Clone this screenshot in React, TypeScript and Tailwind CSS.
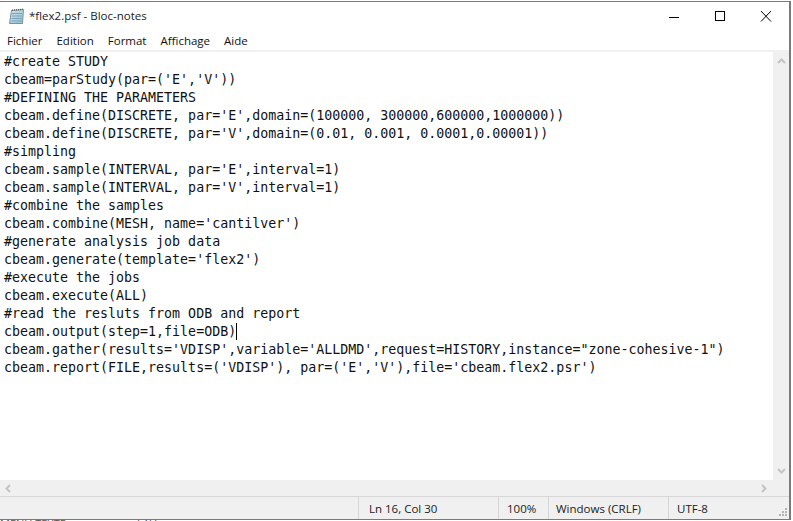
const menuItems = ['Fichier', 'Edition', 'Format', 'Affichage', 'Aide'];

const lines = [
  '#create STUDY',
  "cbeam=parStudy(par=('E','V'))",
  '#DEFINING THE PARAMETERS',
  "cbeam.define(DISCRETE, par='E',domain=(100000, 300000,600000,1000000))",
  "cbeam.define(DISCRETE, par='V',domain=(0.01, 0.001, 0.0001,0.00001))",
  '#simpling',
  "cbeam.sample(INTERVAL, par='E',interval=1)",
  "cbeam.sample(INTERVAL, par='V',interval=1)",
  '#combine the samples',
  "cbeam.combine(MESH, name='cantilver')",
  '#generate analysis job data',
  "cbeam.generate(template='flex2')",
  '#execute the jobs',
  'cbeam.execute(ALL)',
  '#read the resluts from ODB and report',
  'cbeam.output(step=1,file=ODB)',
  'cbeam.gather(results=\'VDISP\',variable=\'ALLDMD\',request=HISTORY,instance="zone-cohesive-1")',
  "cbeam.report(FILE,results=('VDISP'), par=('E','V'),file='cbeam.flex2.psr')",
];

const NotepadIcon = () => (
  <svg width="16" height="17" viewBox="0 0 16 17" className="shrink-0">
    <defs>
      <linearGradient id="pad" x1="0" y1="0" x2="1" y2="1">
        <stop offset="0" stopColor="#cfe6f0" />
        <stop offset="1" stopColor="#8fc0d6" />
      </linearGradient>
    </defs>
    <path d="M2.5 2.5 L14.5 1.5 L13.5 15.5 L.5 15.5 Z" fill="url(#pad)" stroke="#7f919b" />
    <path d="M3 5.5 H13 M3 8 H13 M2.5 10.5 H13 M2.5 13 H13" stroke="#7ea3b6" />
    <path d="M3.5 1.5 V3 M5.5 1.3 V2.8 M7.5 1.1 V2.6 M9.5 1 V2.5 M11.5 .8 V2.3 M13.5 .6 V2.1" stroke="#666" />
  </svg>
);

const App = () => {
  return (
    <div className="w-[793px] h-[521px] bg-white overflow-hidden font-['Open_Sans',sans-serif]">
      <div className="w-[791px] h-[519px] border-t border-r-2 border-b border-[#7a7a7a] mt-px flex flex-col">
        <div className="h-[29px] flex items-center gap-[4px] pl-[9px] text-[11.5px] text-[#222]">
          <NotepadIcon />
          <span className="mb-[2px]">*flex2.psf - Bloc-notes</span>
          <div className="ml-auto flex items-center">
            <svg width="46" height="29" viewBox="0 0 46 29"><path d="M18 15.5 H28" stroke="#000" /></svg>
            <svg width="46" height="29" viewBox="0 0 46 29"><rect x="18.5" y="9.5" width="9" height="9" fill="none" stroke="#000" /></svg>
            <svg width="46" height="29" viewBox="0 0 46 29"><path d="M18 9 L28 19.5 M28 9 L18 19.5" stroke="#000" /></svg>
          </div>
        </div>
        <div className="h-[19px] flex items-center gap-[14px] pl-[7px] text-[11.5px] text-[#111]">
          {menuItems.map(item => (
            <span key={item}>{item}</span>
          ))}
        </div>
        <div className="flex-1 flex flex-col border-t-2 border-[#f0f0f0] min-h-0">
          <div className="flex-1 flex min-h-0">
            <div className="flex-1 pl-1 pt-[1px] overflow-hidden font-['DejaVu_Sans_Mono',monospace] text-[13.3px] leading-[18px] text-[#111] whitespace-pre">
              {lines.map((line, index) => (
                <div key={index} className="h-[18px] flex">
                  {line}
                  {index === 15 && <span className="w-px h-[17px] bg-black" />}
                </div>
              ))}
            </div>
            <div className="w-[16px] bg-[#f0f0f0] flex flex-col justify-between items-center py-[6px] text-[#c4c4c4]">
              <svg width="9" height="6" viewBox="0 0 9 6"><path d="M1 5 L4.5 1.5 L8 5" fill="none" stroke="currentColor" strokeWidth="2" /></svg>
              <svg width="9" height="6" viewBox="0 0 9 6"><path d="M1 1 L4.5 4.5 L8 1" fill="none" stroke="currentColor" strokeWidth="2" /></svg>
            </div>
          </div>
          <div className="h-[16px] bg-[#f0f0f0] flex justify-between items-center pl-[5px] pr-[22px] text-[#c4c4c4]">
            <svg width="6" height="9" viewBox="0 0 6 9"><path d="M5 1 L1.5 4.5 L5 8" fill="none" stroke="currentColor" strokeWidth="2" /></svg>
            <svg width="6" height="9" viewBox="0 0 6 9"><path d="M1 1 L4.5 4.5 L1 8" fill="none" stroke="currentColor" strokeWidth="2" /></svg>
          </div>
          <div className="h-[23px] bg-[#f0f0f0] border-t border-[#d7d7d7] flex text-[11.5px] text-[#222] relative">
            <div className="w-[358px]" />
            <div className="w-[140px] border-l border-[#d7d7d7] pl-[10px] pt-px flex items-center">Ln 16, Col 30</div>
            <div className="w-[50px] border-l border-[#d7d7d7] pl-2 pt-px flex items-center">100%</div>
            <div className="w-[120px] border-l border-[#d7d7d7] pl-[7px] pt-px flex items-center">Windows (CRLF)</div>
            <div className="flex-1 border-l border-[#d7d7d7] pl-2 pt-px flex items-center">UTF-8</div>
            <svg width="10" height="10" viewBox="0 0 10 10" className="absolute right-[1px] bottom-[2px] text-[#b4b4b4]">
              <path d="M7 1 H9 V3 H7 Z M4 4 H6 V6 H4 Z M7 4 H9 V6 H7 Z M1 7 H3 V9 H1 Z M4 7 H6 V9 H4 Z M7 7 H9 V9 H7 Z" fill="currentColor" />
            </svg>
          </div>
        </div>
      </div>
      {/* top edge of whatever sits behind the window */}
      <div className="h-px overflow-hidden flex text-[11px] leading-[8px] text-[#555] whitespace-pre">
        <span className="w-[137px]">MENU TEXTE</span>
        <span>LAV</span>
      </div>
    </div>
  );
};

export default App;
